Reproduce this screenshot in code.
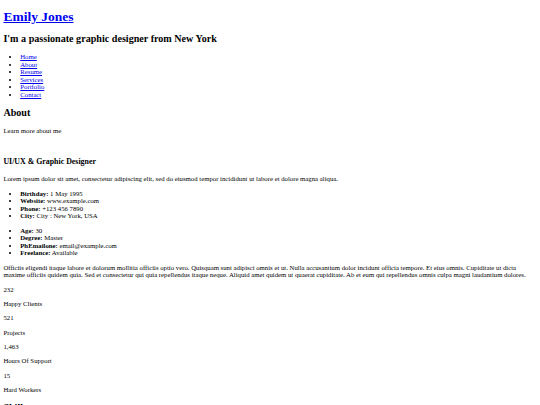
const stats = [
  ['232', 'Happy Clients'],
  ['521', 'Projects'],
  ['1,463', 'Hours Of Support'],
  ['15', 'Hard Workers'],
];

const infoLeft = [
  ['Birthday:', '1 May 1995'],
  ['Website:', 'www.example.com'],
  ['Phone:', '+123 456 7890'],
  ['City:', 'City : New York, USA'],
];

const infoRight = [
  ['Age:', '30'],
  ['Degree:', 'Master'],
  ['PhEmailone:', 'email@example.com'],
  ['Freelance:', 'Available'],
];

const navLinks = ['Home', 'About', 'Resume', 'Services', 'Portfolio', 'Contact'];

const H2 = ({ children }) => <h2 className="my-[0.83em] text-[1.5em] font-bold">{children}</h2>;
const P = ({ children }) => <p className="my-[1em]">{children}</p>;
const link = 'text-[#0000ee] underline';

const InfoList = ({ items }) => (
  <ul className="my-[1em] list-disc pl-[2.5em]">
    {items.map(([label, value]) => (
      <li key={label}>
        <strong className="font-bold">{label}</strong> {value}
      </li>
    ))}
  </ul>
);

export default function App() {
  return (
    <div className="m-[0.5em] text-[6.75px] leading-[1.125] text-black font-['Liberation_Serif','Times_New_Roman',serif]">
      <header>
        <h1 className="my-[0.67em] text-[2em] font-bold">
          <a href="#" className={link}>Emily Jones</a>
        </h1>
        <H2>I'm a passionate graphic designer from New York</H2>
        <nav>
          <ul className="my-[1em] list-disc pl-[2.5em]">
            {navLinks.map((name) => (
              <li key={name}>
                <a href="#" className={link}>{name}</a>
              </li>
            ))}
          </ul>
        </nav>
      </header>

      <section>
        <H2>About</H2>
        <P>Learn more about me</P>
        <div className="h-[1.4em]" />
        <h3 className="my-[1em] text-[1.17em] font-bold">UI/UX &amp; Graphic Designer</h3>
        <P>Lorem ipsum dolor sit amet, consectetur adipiscing elit, sed do eiusmod tempor incididunt ut labore et dolore magna aliqua.</P>
        <InfoList items={infoLeft} />
        <InfoList items={infoRight} />
        <P>
          Officiis eligendi itaque labore et dolorum mollitia officiis optio vero. Quisquam sunt adipisci omnis et ut. Nulla accusantium dolor incidunt officia tempore. Et eius omnis. Cupiditate ut dicta maxime officiis quidem quia. Sed et consectetur qui quia repellendus itaque neque. Aliquid amet quidem ut quaerat cupiditate. Ab et eum qui repellendus omnis culpa magni laudantium dolores.
        </P>
      </section>

      <section>
        {stats.map(([num, label]) => (
          <div key={label}>
            <P>{num}</P>
            <P>{label}</P>
          </div>
        ))}
      </section>

      <section>
        <H2>Skills</H2>
      </section>
    </div>
  );
}
